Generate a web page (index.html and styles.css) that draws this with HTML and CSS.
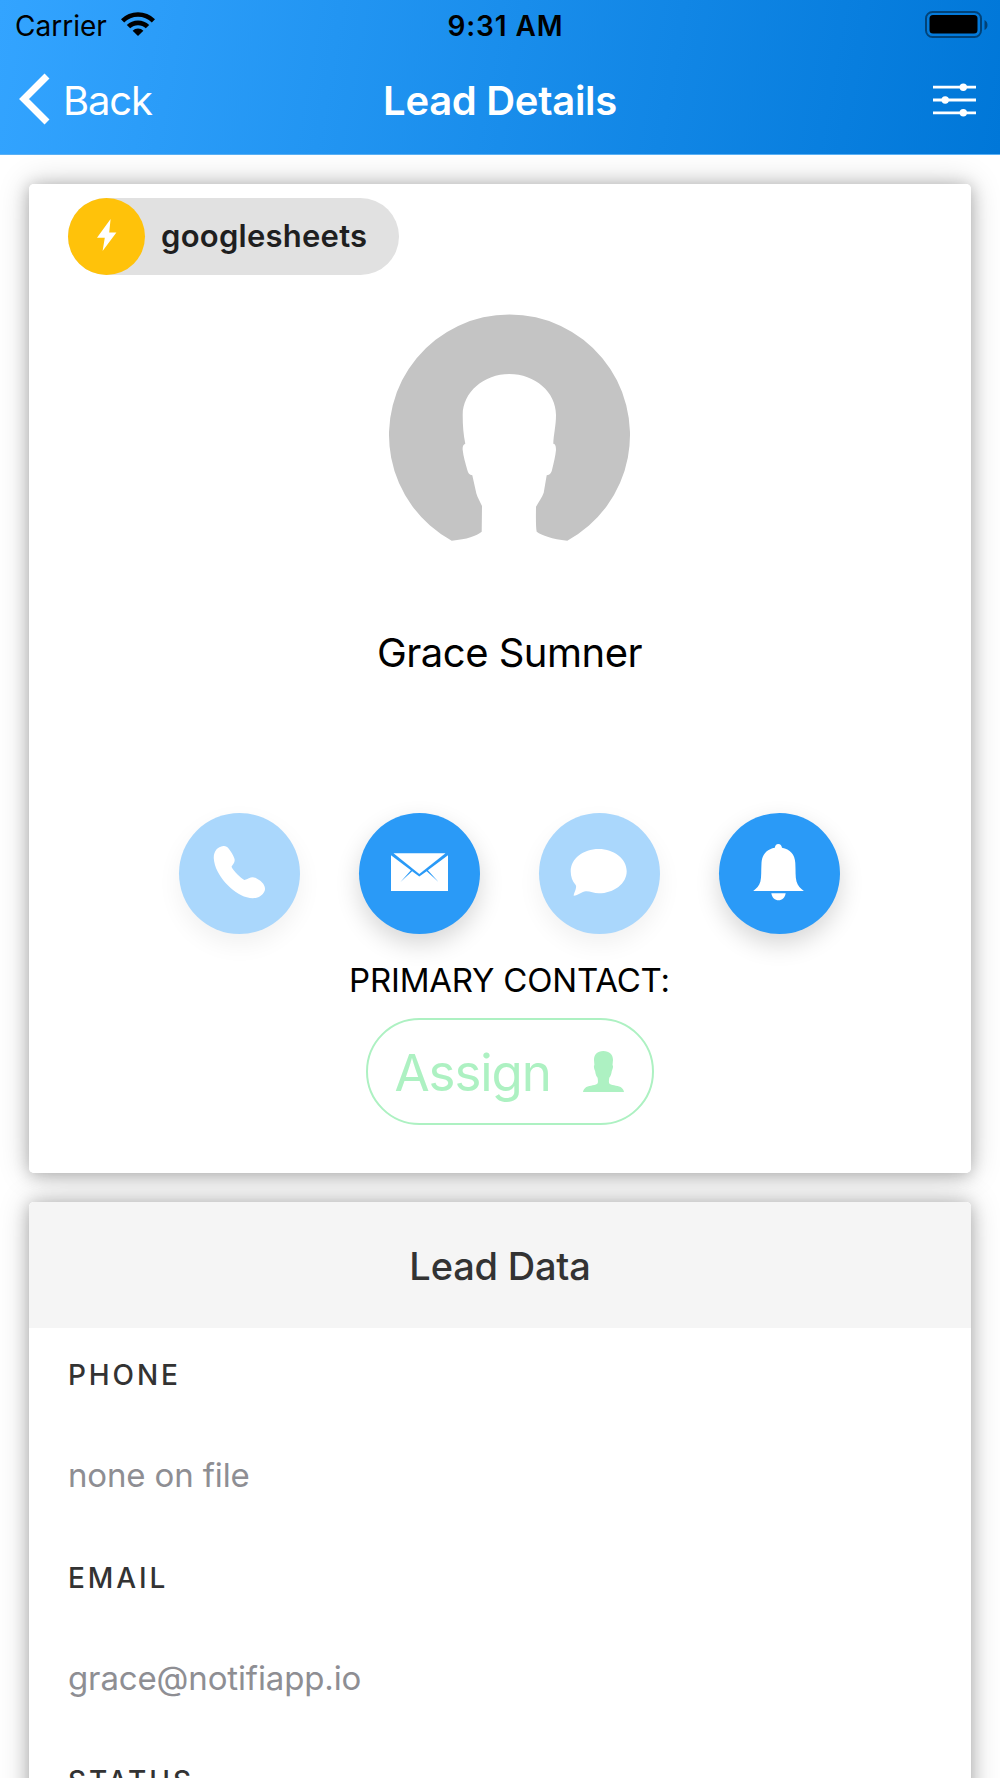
FILE: index.html
```html
<!DOCTYPE html>
<html lang="en">
  <head>
    <meta charset="UTF-8" />
    <meta name="viewport" content="width=device-width, initial-scale=1.0" />
    <title>Lead Details</title>
    <link rel="stylesheet" href="styles.css">
  </head>
  <body>
    <header class="header">
      <div class="status-bar">
        <div class="carrier">
          <span>Carrier</span>
          <svg class="wifi" width="34" height="24" viewBox="0 0 34 24">
            <path d="M0 7.2 A24 24 0 0 1 34 7.2 L30.8 10.4 A19.6 19.6 0 0 0 3.2 10.4 Z" />
            <path d="M5.8 13 A16 16 0 0 1 28.2 13 L24.8 16.3 A11.2 11.2 0 0 0 9.2 16.3 Z" />
            <path d="M11.6 18.7 A7.8 7.8 0 0 1 22.4 18.7 L17 24 Z" />
          </svg>
        </div>
        <span class="time">9:31 AM</span>
        <svg class="battery" width="64" height="28" viewBox="0 0 64 28">
          <rect x="1" y="1" width="55" height="25" rx="6.5" fill="none" stroke="#000" stroke-opacity=".45" stroke-width="2" />
          <rect x="4.5" y="4" width="48" height="18.5" rx="3.5" />
          <path d="M59.5 9 Q62.5 10.5 62.5 14 T59.5 19 Z" fill-opacity=".45" />
        </svg>
      </div>
      <nav class="nav">
        <a class="back">
          <svg width="31" height="52" viewBox="0 0 31 52">
            <path d="M28 3 L5 26 L28 49" fill="none" stroke="#fff" stroke-width="7" />
          </svg>
          <span>Back</span>
        </a>
        <h1 class="title">Lead Details</h1>
        <svg class="options" width="43" height="34" viewBox="0 0 43 34" fill="#fff">
          <path d="M0 2.8h43v2.8H0z M0 15.6h43v2.8H0z M0 28.4h43v2.8H0z" />
          <circle cx="30.3" cy="4.2" r="3.7" />
          <circle cx="12.2" cy="17" r="3.7" />
          <circle cx="30.3" cy="29.8" r="3.7" />
        </svg>
      </nav>
    </header>

    <main class="content">
      <section class="card lead">
        <div class="chip">
          <div class="chip-icon">
            <svg width="20" height="32" viewBox="0 0 20 32" fill="#fff">
              <path d="M13.6 0 L0 18.8 H7.8 L5.6 32 L19.4 13.4 H12.2 Z" />
            </svg>
          </div>
          <span class="chip-label">googlesheets</span>
        </div>

        <svg class="avatar" width="241" height="241" viewBox="0 0 241 241">
          <path d="M62.7 226.7 A120.5 120.5 0 1 1 178.3 226.7 C163 225 153 221.5 147.7 217.7 C146.6 213 147 200 147 192.7 C150 187 153 184 154.7 178.7 L157.7 161.3 C161 161 162.4 158.5 163 156 C165 148 166.4 142 167 136 C167 132.5 166.5 130 164.3 129.7 C164.5 121 167 112 167 101 C167 78 146 60 120.3 60 C95 60 73.7 78 73.7 101 C73.7 112 74.5 121 76.3 129.7 C74 130.5 73.4 133 73.7 136 C74.3 142 76.4 149 78.3 156 C79 159 80.5 161 83.3 161.3 L87.3 179.3 C88.5 183.5 91 187.5 93 192 L92.7 217.7 C87.5 222 78 225.2 62.7 226.7 Z" fill="#c4c4c4" />
        </svg>
        <h2 class="name">Grace Sumner</h2>

        <div class="actions">
          <button class="action disabled">
            <svg viewBox="0 0 121 121" fill="#fff">
              <path d="M44.3 33 C38.3 33.5 34.3 39 34.8 45.5 C35.8 62 53.8 80.5 67.8 84.3 C75.8 86.5 82.8 84.5 85.6 78 C87.6 72.5 82 67.5 76.8 65 C72.3 62.7 70.3 65.5 65.3 67 C61.8 65 54.3 58 52.5 53.7 C54.3 50.5 56.6 49 55.3 45.2 C54.1 42 52 38.7 49.8 35.8 C48.3 33.6 46.6 32.8 44.3 33 Z" />
            </svg>
          </button>
          <button class="action">
            <svg viewBox="0 0 121 121" fill="#fff">
              <path d="M34.5 40.3 H86.5 L60.3 61 Z" />
              <path d="M32 42.2 L51.9 57.3 L41.5 69 L53.1 58.2 L60.3 63.6 L67.7 58.2 L79.5 69 L68.9 57.3 L89 42.2 V78 H32 Z" />
            </svg>
          </button>
          <button class="action disabled">
            <svg viewBox="0 0 121 121" fill="#fff">
              <path d="M59.7 36 C75 36 87.7 45.8 87.7 58.2 C87.7 70.5 75 80.3 59.7 80.3 C55 80.3 51 78 46.8 78.2 C43 78.5 39 82.5 34.8 82.8 C34 81.8 38.5 74.5 36.7 72 C33.3 68.3 31.7 63.5 31.7 58.2 C31.7 45.8 44 36 59.7 36 Z" />
            </svg>
          </button>
          <button class="action">
            <svg viewBox="0 0 121 121" fill="#fff">
              <path d="M59.3 31 C61.5 31 62.6 32.5 63 34.7 C71 36 76 41.5 76.3 50 C76.8 58 76.2 64 77.5 68.5 C78.8 73 81.5 75.5 84.9 77.9 H34.2 C37.5 75.5 40.2 73 41.4 68.5 C42.6 64 42 58 42.5 50 C43 41.5 48 36 55.8 34.7 C56.2 32.5 57.2 31 59.3 31 Z" />
              <path d="M52.3 80.2 H66.7 C66 84.8 63 87.2 59.5 87.2 S53 84.8 52.3 80.2 Z" />
            </svg>
          </button>
        </div>

        <p class="contact-label">PRIMARY CONTACT:</p>
        <button class="assign">
          <span>Assign</span>
          <svg width="41" height="41" viewBox="0 0 41 41" fill="#adf1c2">
            <path d="M20.3 0 C26.5 0 30 3.6 30 9 L29.5 14 C30.6 15 29.8 17.5 28.8 20 C28.3 23.5 27.6 24.8 26.3 26.8 C25.8 29.5 25.7 32 26.5 32.8 C30 35 36 34.2 38.8 37 C40.2 38.4 40.8 39.5 41 41 H0 C.2 39.5 .8 38.4 2.2 37 C5 34.2 11 35 14.3 32.8 C15.3 32 15 29.5 14.6 26.8 C13.2 24.8 12.6 23.5 12.1 20 C11 17.5 10.4 15 11.4 14 L11 9 C11 3.6 14.2 0 20.3 0 Z" />
          </svg>
        </button>
      </section>

      <section class="card data">
        <h2 class="card-header">Lead Data</h2>
        <dl class="fields">
          <dt>PHONE</dt>
          <dd>none on file</dd>
          <dt>EMAIL</dt>
          <dd>grace@notifiapp.io</dd>
          <dt>STATUS</dt>
        </dl>
      </section>
    </main>
  </body>
</html>
```
FILE: styles.css
```css
* {
  margin: 0;
  padding: 0;
  box-sizing: border-box;
}

body {
  font-family: Inter, "Liberation Sans", sans-serif;
  background-color: #fff;
  height: 1778px;
  overflow: hidden;
}

svg {
  display: block;
}

button {
  font-family: inherit;
  border: none;
  cursor: pointer;
}

/* Header */
.header {
  height: 155px;
  background: linear-gradient(100deg, #33a4ff, #0077d8);
  border-bottom: 1px solid #5ab0f4;
}

.status-bar,
.nav {
  display: grid;
  grid-template-columns: 1fr auto 1fr;
  align-items: center;
}

.status-bar {
  height: 50px;
  padding: 0 11px 0 15px;
  font-size: 28px;
}

.carrier {
  display: flex;
  align-items: center;
  gap: 14px;
}

.carrier span,
.time {
  padding-top: 1px;
}

.wifi {
  margin-bottom: 2px;
}

.time {
  margin-left: 7px;
  font-weight: 600;
  letter-spacing: 0.9px;
}

.battery,
.options {
  justify-self: end;
}

.battery {
  margin-bottom: 1px;
}

.nav {
  height: 100px;
  padding: 0 24px;
  color: #fff;
}

.back {
  display: flex;
  align-items: center;
  gap: 13px;
  margin-left: -5px;
  font-size: 40px;
  letter-spacing: -1.2px;
}

.back svg {
  margin-bottom: 2px;
}

.title {
  font-size: 40px;
  font-weight: 600;
  letter-spacing: -0.3px;
}

/* Cards */
.content {
  display: flex;
  flex-direction: column;
  gap: 29px;
  padding: 29px;
}

.card {
  position: relative;
  background-color: #fff;
  border-radius: 5px;
}

/* shadow sits behind both cards so it never falls on a neighbour */
.card::before {
  content: "";
  position: absolute;
  inset: 0;
  z-index: -1;
  border-radius: 5px;
  box-shadow: 0 2px 16px rgba(0, 0, 0, 0.24), 0 0 32px rgba(0, 0, 0, 0.2);
}

.lead {
  display: flex;
  flex-direction: column;
  align-items: center;
  padding: 14px 20px 48px 39px;
}

.chip {
  display: flex;
  align-items: center;
  align-self: flex-start;
  gap: 16px;
  width: 331px;
  height: 77px;
  border-radius: 39px;
  background-color: #e1e1e1;
}

.chip-icon {
  display: flex;
  align-items: center;
  justify-content: center;
  width: 77px;
  height: 77px;
  padding-bottom: 3px;
  border-radius: 50%;
  background-color: #ffc20a;
}

.chip-label {
  padding-bottom: 2px;
  font-size: 31px;
  font-weight: 600;
  letter-spacing: 0.25px;
  color: #1f1f1f;
}

.avatar {
  margin-top: 39px;
}

.name {
  margin-top: 68px;
  font-size: 40px;
  font-weight: 400;
  line-height: 60px;
  letter-spacing: -0.5px;
}

.actions {
  display: flex;
  gap: 59px;
  margin-top: 130px;
}

.action {
  width: 121px;
  height: 121px;
  border-radius: 50%;
  background-color: #2a9af7;
  box-shadow: 0 10px 24px rgba(0, 0, 0, 0.16);
}

.disabled {
  background-color: #aad7fc;
  box-shadow: 0 10px 24px rgba(0, 0, 0, 0.06);
}

.contact-label {
  margin-top: 26px;
  font-size: 33px;
  line-height: 40px;
  letter-spacing: -0.2px;
}

.assign {
  display: flex;
  align-items: center;
  justify-content: space-between;
  width: 288px;
  height: 107px;
  margin-top: 18px;
  padding: 0 28px 0 27px;
  border: 2px solid #adf1c2;
  border-radius: 54px;
  background: none;
  color: #adf1c2;
  font-size: 51px;
  letter-spacing: -1.1px;
}

.assign span {
  padding-top: 2px;
}

.card-header {
  height: 126px;
  border-radius: 5px 5px 0 0;
  background-color: #f5f5f5;
  color: #333;
  font-size: 38px;
  font-weight: 500;
  line-height: 128px;
  letter-spacing: -0.2px;
  text-align: center;
}

.fields {
  padding: 1px 39px 0;
}

.fields dt {
  color: #333;
  font-size: 28px;
  font-weight: 500;
  line-height: 93px;
  letter-spacing: 2.9px;
}

.fields dd {
  margin-bottom: 4px;
  color: #8e8e93;
  font-size: 33px;
  line-height: 106px;
  letter-spacing: -0.14px;
}
```
